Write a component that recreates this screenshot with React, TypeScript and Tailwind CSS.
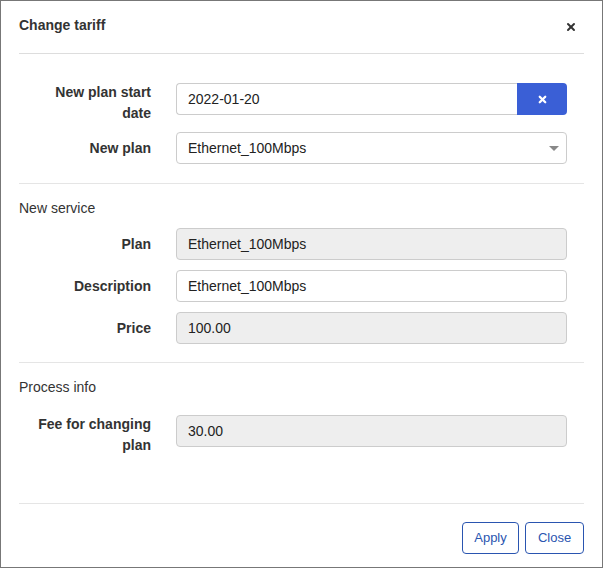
import { X } from "lucide-react";

function Label({ children }: { children: React.ReactNode }) {
  return (
    <label className="-mt-[1px] w-[132px] shrink-0 text-right text-[14px] font-bold leading-[21px] text-[#333]">
      {children}
    </label>
  );
}

function Field({ value, readOnly }: { value: string; readOnly?: boolean }) {
  return (
    <div
      className={
        "flex h-8 flex-1 items-center rounded-[4px] border border-[#ccc] px-[11px] text-[14px] text-[#222] " +
        (readOnly ? "bg-[#eee]" : "bg-white")
      }
    >
      {value}
    </div>
  );
}

export default function App() {
  return (
    <div className="flex h-[568px] w-[603px] flex-col border border-[#777] bg-white font-['Liberation_Sans',Arial,sans-serif] text-[#333]">
      {/* Header */}
      <div className="mx-[18px] flex h-[53px] shrink-0 items-start justify-between border-b border-[#ddd] pt-[14px]">
        <h4 className="text-[14px] font-bold leading-[20px] text-[#333]">Change tariff</h4>
        <X className="mr-[7px] mt-[6px] h-[12px] w-[12px] text-[#333]" strokeWidth={4} />
      </div>

      {/* Tariff */}
      <div className="mx-[18px] flex shrink-0 flex-col border-b border-[#e5e5e5] pb-[19px] pt-[29px]">
        <div className="flex h-[49px] items-start gap-[25px] pr-[17px]">
          <Label>
            New plan start
            <br />
            date
          </Label>
          <div className="flex h-8 flex-1">
            <div className="flex flex-1 items-center rounded-l-[4px] border border-r-0 border-[#ccc] px-[11px] text-[14px] text-[#222]">
              2022-01-20
            </div>
            <button className="flex w-[50px] items-center justify-center rounded-r-[4px] bg-[#3a5fd6]">
              <X className="h-[11px] w-[11px] text-white" strokeWidth={5} />
            </button>
          </div>
        </div>
        <div className="flex items-center gap-[25px] pr-[17px]">
          <label className="w-[132px] shrink-0 text-right text-[14px] font-bold leading-[21px] text-[#333]">
            New plan
          </label>
          <div className="relative flex h-8 flex-1 items-center rounded-[4px] border border-[#ccc] bg-white px-[11px] text-[14px] text-[#222]">
            Ethernet_100Mbps
            <span className="absolute right-[7px] top-[13px] h-0 w-0 border-x-[5px] border-t-[5px] border-x-transparent border-t-[#888]" />
          </div>
        </div>
      </div>

      {/* New service */}
      <div className="mx-[18px] flex shrink-0 flex-col border-b border-[#e5e5e5] pb-[18px]">
        <p className="pb-[10px] pt-[14px] text-[14px] leading-[20px] text-[#333]">New service</p>
        <div className="flex flex-col gap-[10px] pr-[17px]">
          <div className="flex items-center gap-[25px]">
            <label className="w-[132px] shrink-0 text-right text-[14px] font-bold text-[#333]">Plan</label>
            <Field value="Ethernet_100Mbps" readOnly />
          </div>
          <div className="flex items-center gap-[25px]">
            <label className="w-[132px] shrink-0 text-right text-[14px] font-bold text-[#333]">
              Description
            </label>
            <Field value="Ethernet_100Mbps" />
          </div>
          <div className="flex items-center gap-[25px]">
            <label className="w-[132px] shrink-0 text-right text-[14px] font-bold text-[#333]">Price</label>
            <Field value="100.00" readOnly />
          </div>
        </div>
      </div>

      {/* Process info */}
      <div className="mx-[18px] flex shrink-0 flex-col border-b border-[#e5e5e5] pb-[47px]">
        <p className="pb-[18px] pt-[14px] text-[14px] leading-[20px] text-[#333]">Process info</p>
        <div className="flex items-start gap-[25px] pr-[17px]">
          <Label>
            Fee for changing
            <br />
            plan
          </Label>
          <Field value="30.00" readOnly />
        </div>
      </div>

      {/* Footer */}
      <div className="mx-[18px] flex shrink-0 justify-end gap-[6px] pt-[18px]">
        <button className="h-8 w-[57px] rounded-[4px] border border-[#2a55b0] text-[13px] text-[#2a55b0]">
          Apply
        </button>
        <button className="h-8 w-[59px] rounded-[4px] border border-[#2a55b0] text-[13px] text-[#2a55b0]">
          Close
        </button>
      </div>
    </div>
  );
}
